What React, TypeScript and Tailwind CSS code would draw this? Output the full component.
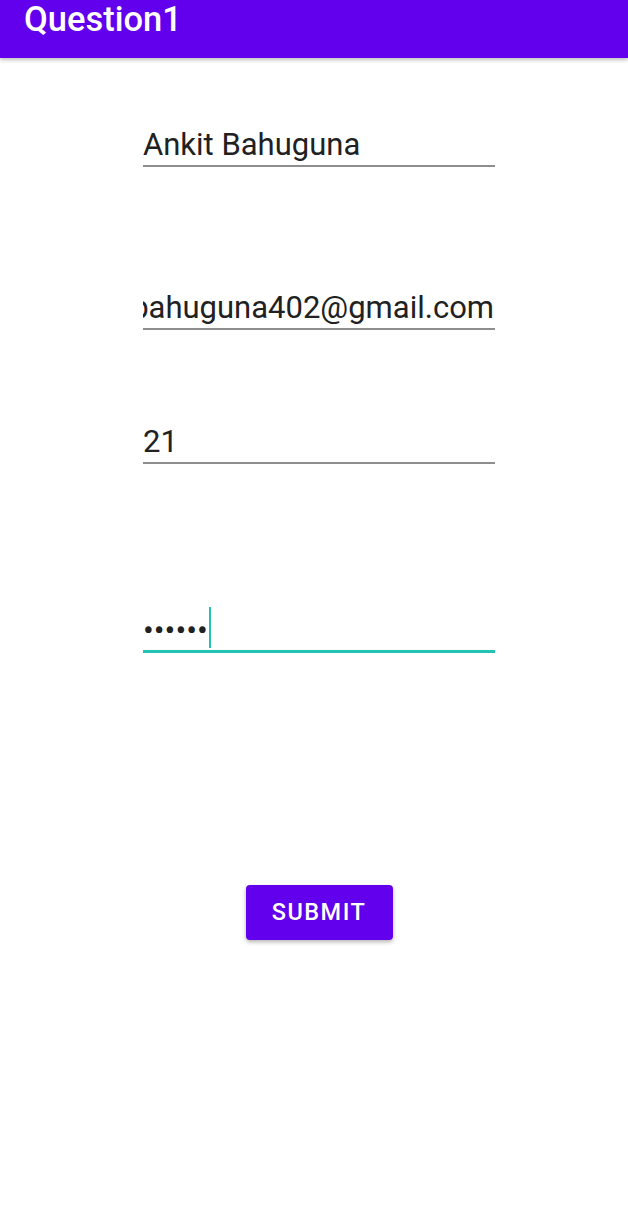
import React from "react";

export default function App() {
  const font = { fontFamily: "Roboto, 'Noto Sans', sans-serif" };
  return (
    <div className="w-[628px] h-[1218px] bg-white relative overflow-hidden" style={font}>
      <div className="h-[58px] bg-[#6200ee] shadow-[0_2px_4px_rgba(0,0,0,0.25)] relative z-10 pl-[24px] pt-[2px]">
        <div className="text-[34.5px] leading-none font-medium text-white">Question1</div>
      </div>
      <div className="flex flex-col items-center pl-[10px]">
        <div className="w-[352px] mt-[67px]">
          <div className="h-[40px] leading-[40px] text-[31px] text-[#212121] whitespace-nowrap">Ankit Bahuguna</div>
          <div className="h-[2px] bg-[#8e8e8e]" />
        </div>
        <div className="w-[352px] mt-[121px]">
          <div className="h-[40px] leading-[40px] text-[31px] text-[#212121] whitespace-nowrap overflow-hidden flex justify-end">
            <span className="shrink-0 pr-[1px]">ankitbahuguna402@gmail.com</span>
          </div>
          <div className="h-[2px] bg-[#8e8e8e]" />
        </div>
        <div className="w-[352px] mt-[92px]">
          <div className="h-[40px] leading-[40px] text-[31px] text-[#212121] whitespace-nowrap">21</div>
          <div className="h-[2px] bg-[#8e8e8e]" />
        </div>
        <div className="w-[352px] mt-[145px]">
          <div className="h-[41px] flex items-center">
            <span className="text-[32px] leading-[40px] text-[#212121] tracking-[0px]">••••••</span>
            <div className="w-[2px] h-[41px] bg-[#22c3b3] ml-[1px] mt-[-4px]" />
          </div>
          <div className="h-[3px] bg-[#22c3b3]" />
        </div>
        <button className="mt-[232px] w-[147px] h-[55px] rounded-[4px] bg-[#6200ee] text-white text-[23.5px] font-medium tracking-[1.5px] shadow-[0_2px_4px_rgba(0,0,0,0.3)] flex items-center justify-center">
          SUBMIT
        </button>
      </div>
    </div>
  );
}
